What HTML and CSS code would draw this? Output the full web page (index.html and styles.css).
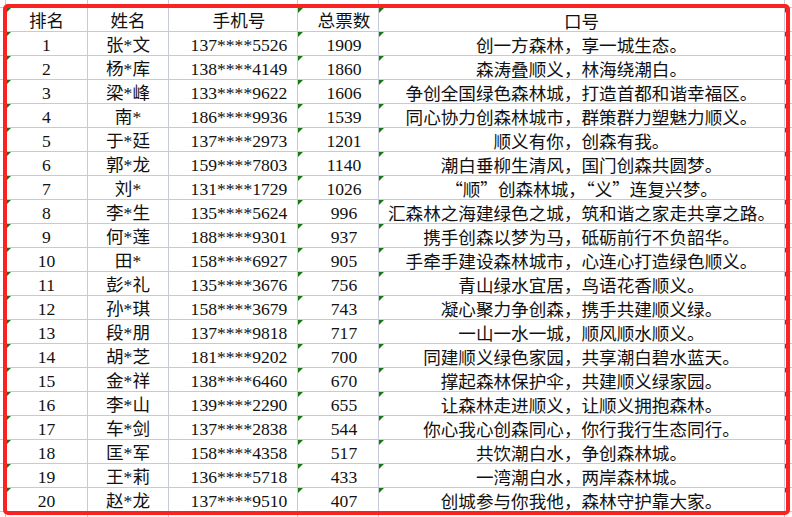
FILE: index.html
```html
<!DOCTYPE html>
<html lang="zh-CN">
<head>
<meta charset="utf-8">
<title>投票排名</title>
<link rel="stylesheet" href="styles.css">
</head>
<body>
<div class="page">
  <div class="sheet">
    <div></div><div></div><div></div><div></div><div></div><div></div><div></div>

    <div></div><div class="a g">排名</div><div class="b">姓名</div><div class="c">手机号</div><div class="d g">总票数</div><div class="s g">口号</div><div class="g"></div>

    <div></div><div class="a g">1</div><div class="b">张*文</div><div class="c">137****5526</div><div class="d g">1909</div><div class="s g">创一方森林，享一城生态。</div><div class="g"></div>
    <div></div><div class="a g">2</div><div class="b">杨*库</div><div class="c">138****4149</div><div class="d g">1860</div><div class="s g">森涛叠顺义，林海绕潮白。</div><div class="g"></div>
    <div></div><div class="a g">3</div><div class="b">梁*峰</div><div class="c">133****9622</div><div class="d g">1606</div><div class="s g">争创全国绿色森林城，打造首都和谐幸福区。</div><div class="g"></div>
    <div></div><div class="a g">4</div><div class="b">南*</div><div class="c">186****9936</div><div class="d g">1539</div><div class="s g">同心协力创森林城市，群策群力塑魅力顺义。</div><div class="g"></div>
    <div></div><div class="a g">5</div><div class="b">于*廷</div><div class="c">137****2973</div><div class="d g">1201</div><div class="s g">顺义有你，创森有我。</div><div class="g"></div>
    <div></div><div class="a g">6</div><div class="b">郭*龙</div><div class="c">159****7803</div><div class="d g">1140</div><div class="s g">潮白垂柳生清风，国门创森共圆梦。</div><div class="g"></div>
    <div></div><div class="a g">7</div><div class="b">刘*</div><div class="c">131****1729</div><div class="d g">1026</div><div class="s g">“顺”创森林城，“义”连复兴梦。</div><div class="g"></div>
    <div></div><div class="a g">8</div><div class="b">李*生</div><div class="c">135****5624</div><div class="d g">996</div><div class="s g">汇森林之海建绿色之城，筑和谐之家走共享之路。</div><div class="g"></div>
    <div></div><div class="a g">9</div><div class="b">何*莲</div><div class="c">188****9301</div><div class="d g">937</div><div class="s g">携手创森以梦为马，砥砺前行不负韶华。</div><div class="g"></div>
    <div></div><div class="a g">10</div><div class="b">田*</div><div class="c">158****6927</div><div class="d g">905</div><div class="s g">手牵手建设森林城市，心连心打造绿色顺义。</div><div class="g"></div>
    <div></div><div class="a g">11</div><div class="b">彭*礼</div><div class="c">135****3676</div><div class="d g">756</div><div class="s g">青山绿水宜居，鸟语花香顺义。</div><div class="g"></div>
    <div></div><div class="a g">12</div><div class="b">孙*琪</div><div class="c">158****3679</div><div class="d g">743</div><div class="s g">凝心聚力争创森，携手共建顺义绿。</div><div class="g"></div>
    <div></div><div class="a g">13</div><div class="b">段*朋</div><div class="c">137****9818</div><div class="d g">717</div><div class="s g">一山一水一城，顺风顺水顺义。</div><div class="g"></div>
    <div></div><div class="a g">14</div><div class="b">胡*芝</div><div class="c">181****9202</div><div class="d g">700</div><div class="s g">同建顺义绿色家园，共享潮白碧水蓝天。</div><div class="g"></div>
    <div></div><div class="a g">15</div><div class="b">金*祥</div><div class="c">138****6460</div><div class="d g">670</div><div class="s g">撑起森林保护伞，共建顺义绿家园。</div><div class="g"></div>
    <div></div><div class="a g">16</div><div class="b">李*山</div><div class="c">139****2290</div><div class="d g">655</div><div class="s g">让森林走进顺义，让顺义拥抱森林。</div><div class="g"></div>
    <div></div><div class="a g">17</div><div class="b">车*剑</div><div class="c">137****2838</div><div class="d g">544</div><div class="s g">你心我心创森同心，你行我行生态同行。</div><div class="g"></div>
    <div></div><div class="a g">18</div><div class="b">匡*军</div><div class="c">158****4358</div><div class="d g">517</div><div class="s g">共饮潮白水，争创森林城。</div><div class="g"></div>
    <div></div><div class="a g">19</div><div class="b">王*莉</div><div class="c">136****5718</div><div class="d g">433</div><div class="s g">一湾潮白水，两岸森林城。</div><div class="g"></div>
    <div></div><div class="a g">20</div><div class="b">赵*龙</div><div class="c">137****9510</div><div class="d g">407</div><div class="s g">创城参与你我他，森林守护靠大家。</div><div class="g"></div>

    <div></div><div></div><div></div><div></div><div></div><div></div><div></div>
  </div>
  <div class="frame"></div>
</div>
</body>
</html>
```

FILE: styles.css
```css
html, body {
  margin: 0;
  padding: 0;
  background: #fff;
  overflow: hidden;
}

.page {
  position: relative;
  width: 792px;
  height: 517px;
}

.sheet {
  display: grid;
  grid-template-columns: 5px 81px 80px 128px 80px 405px 1fr;
  grid-template-rows: 7px repeat(21, 23px) 1fr;
  gap: 1px;
  width: 792px;
  height: 517px;
  background: #c5cad6;
  font-family: "Liberation Serif", "Noto Sans CJK SC", serif;
  font-size: 17.6px;
  color: #111;
}

.sheet > div {
  position: relative;
  background: #fff;
  text-align: center;
  line-height: 20px;
  padding-top: 3px;
  box-sizing: border-box;
  white-space: nowrap;
}

.c,
.d {
  padding-left: 12px;
}

.s {
  font-family: "Noto Sans CJK SC", "Liberation Serif", serif;
}

.g::before {
  content: "";
  position: absolute;
  left: 0;
  top: 0;
  border-top: 5px solid #137a13;
  border-right: 5px solid transparent;
}

.frame {
  position: absolute;
  left: 3px;
  top: 4px;
  width: 787px;
  height: 511px;
  box-sizing: border-box;
  border: 4px solid #fb2222;
  border-radius: 5px;
  pointer-events: none;
}
```
